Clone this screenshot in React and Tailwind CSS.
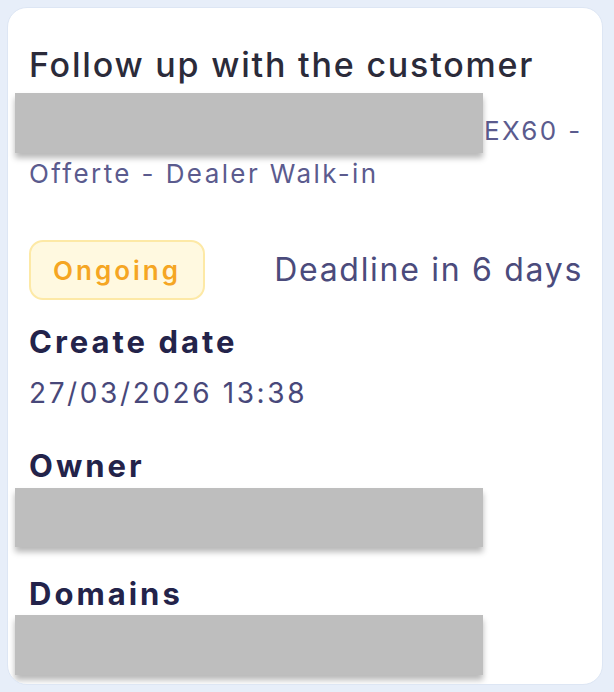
import React from 'react';

const font = { fontFamily: 'Inter, "Noto Sans", sans-serif' };

const Redacted = ({ className = '' }) => (
  <div className={`bg-[#bebebe] shadow-[0_5px_6px_rgba(0,0,0,0.28)] ${className}`} />
);

const Field = ({ label, children, className = '' }) => (
  <div className={className}>
    <p className="text-[31px] leading-[34px] font-bold tracking-[3px] text-[#23234a]">{label}</p>
    {children}
  </div>
);

export default function App() {
  return (
    <div className="w-[614px] h-[692px] bg-[#e7eef9] pt-[7px] pl-[7px]" style={font}>
      <div className="w-[596px] h-[678px] bg-white rounded-[20px] border border-[#dde6f4] pl-[21px] pr-[19px] pt-[37px] overflow-hidden">
        <h2 className="text-[34px] leading-[40px] font-medium tracking-[1.8px] text-[#2b2b3a]">
          Follow up with the customer
        </h2>

        <div className="relative mt-[24px] text-[26px] leading-[43px] tracking-[2.4px] text-[#5b5b8e]">
          <Redacted className="absolute -left-[14px] -top-[16px] w-[468px] h-[60px]" />
          <p className="pl-[455px]">EX60 -</p>
          <p>Offerte - Dealer Walk-in</p>
        </div>

        <div className="mt-[45px] flex items-center justify-between">
          <span className="h-[60px] w-[176px] flex items-center justify-center rounded-[14px] border-2 border-[#fde9a6] bg-[#fff9e0] text-[26px] font-semibold tracking-[3px] text-[#f5a623]">
            Ongoing
          </span>
          <span className="text-[32px] tracking-[1.7px] text-[#4b4b7c]">Deadline in 6 days</span>
        </div>

        <Field label="Create date" className="mt-[25px]">
          <p className="mt-[17px] text-[28px] leading-[34px] tracking-[2.6px] text-[#48487a]">27/03/2026 13:38</p>
        </Field>

        <Field label="Owner" className="mt-[39px]">
          <Redacted className="-ml-[14px] mt-[5px] w-[468px] h-[59px]" />
        </Field>

        <Field label="Domains" className="mt-[30px]">
          <Redacted className="-ml-[14px] mt-[4px] w-[468px] h-[60px]" />
        </Field>
      </div>
    </div>
  );
}
